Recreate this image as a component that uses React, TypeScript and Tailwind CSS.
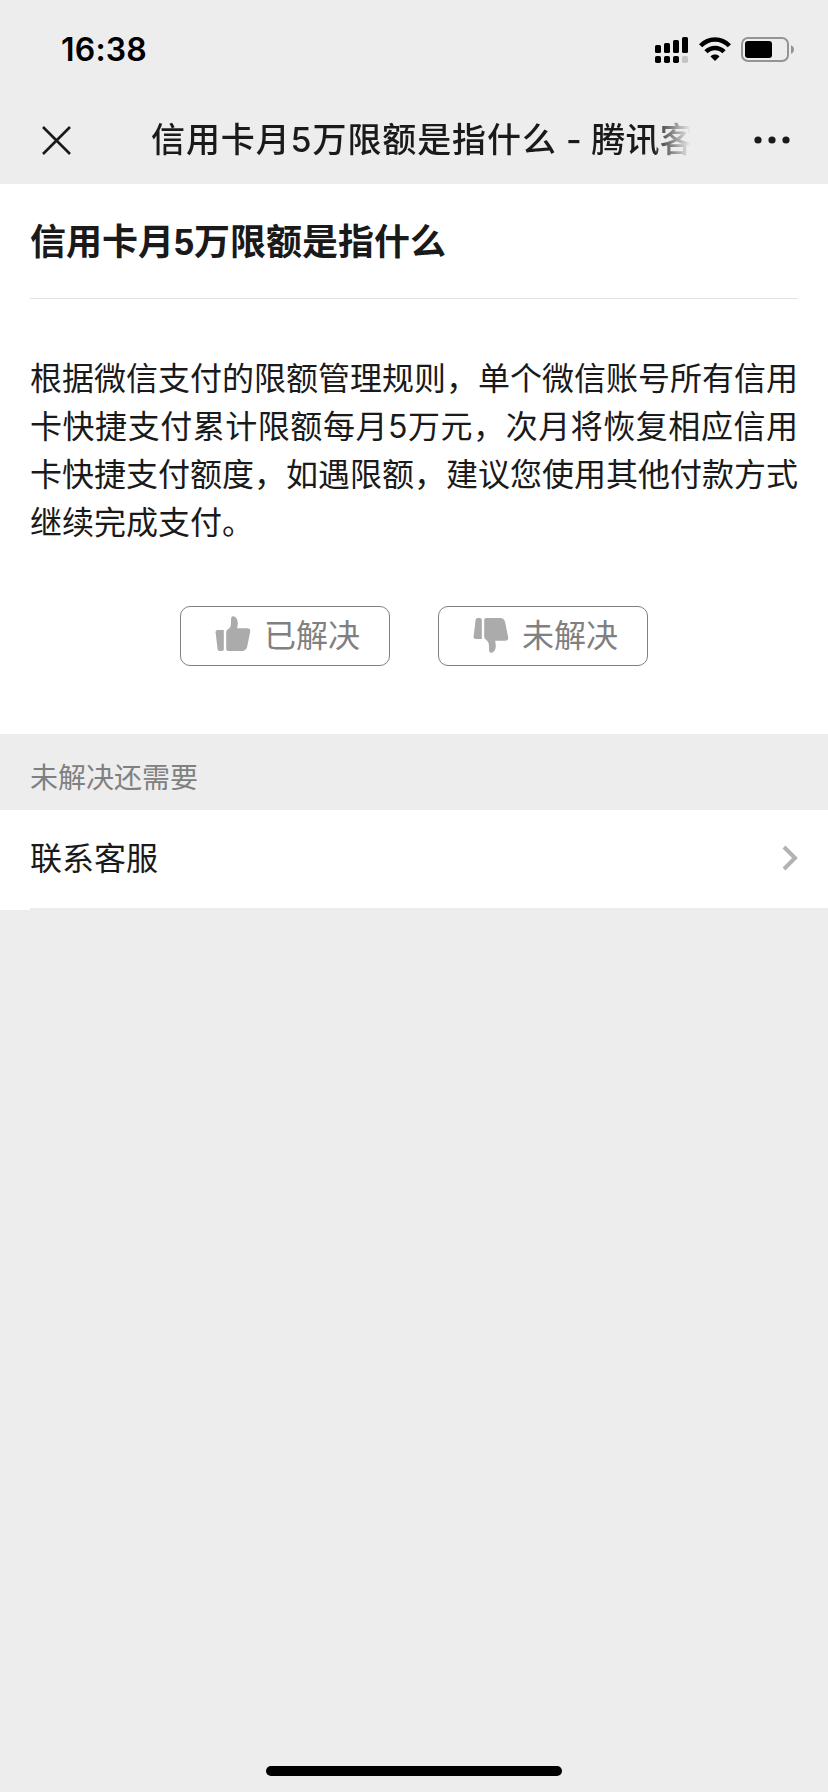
import { useState } from "react";

type Vote = "solved" | "unsolved" | null;

const title = "信用卡月5万限额是指什么";

function SignalIcon() {
  return (
    <svg width="34" height="26" viewBox="0 0 34 26" fill="#000">
      <rect x="0" y="8" width="6" height="8" rx="1.5" />
      <rect x="9" y="6" width="6" height="10" rx="1.5" />
      <rect x="18" y="3" width="6" height="13" rx="1.5" />
      <rect x="27" y="0" width="6" height="16" rx="1.5" />
      <rect x="0" y="19" width="6" height="7" rx="1.8" />
      <rect x="9" y="19" width="6" height="7" rx="1.8" />
      <rect x="18" y="19" width="6" height="7" rx="1.8" />
      <rect x="27" y="19" width="6" height="7" rx="1.8" fill="#c4c4c4" />
    </svg>
  );
}

function WifiIcon() {
  return (
    <svg width="32" height="24" viewBox="0 0 32 24">
      <g fill="none" stroke="#000" strokeWidth="4.5">
        <path d="M1.6 8.8C9.8 0.4 22.2 0.4 30.4 8.8" />
        <path d="M7 14.8C12 9.6 20 9.6 25 14.8" />
      </g>
      <path d="M16 24 11.5 19.4C13.9 17 18.1 17 20.5 19.4Z" fill="#000" />
    </svg>
  );
}

function BatteryIcon() {
  return (
    <svg width="54" height="25" viewBox="0 0 54 25">
      <rect
        x="1"
        y="1"
        width="46"
        height="23"
        rx="6"
        fill="none"
        stroke="#949494"
        strokeWidth="2"
      />
      <rect x="4" y="4" width="27" height="17" rx="3" fill="#000" />
      <path d="M50 8.2C54 9.6 54 15.4 50 16.8Z" fill="#949494" />
    </svg>
  );
}

function ThumbUpIcon() {
  return (
    <svg width="36" height="36" viewBox="0 0 36 36" fill="#ababab">
      <path d="M2.6 14H8.8V33.2Q8.8 35 7 35H4.6Q2.9 35 2.6 33.2L0.6 16.2Q0.4 14 2.6 14Z" />
      <path d="M11.2 16.2Q11.2 14.2 13 13.2C15.6 11.6 16.2 9 16 5.4C15.9 1.8 16.4 0.2 18 0.2C20.8 0.2 22.8 3.4 22.8 7C22.8 9.2 22.2 10.8 22.2 12.2H32Q35.6 12.2 35.2 15.4L32.2 30.6Q31.2 35 27 35H13.2Q11.2 35 11.2 33Z" />
    </svg>
  );
}

function ThumbDownIcon() {
  return (
    <svg width="36" height="36" viewBox="0 0 36 36" fill="#ababab">
      <path d="M4.6 1H7Q8.8 1 8.8 2.8V22H2.6Q0.4 22 0.6 19.8L2.6 2.8Q2.9 1 4.6 1Z" />
      <path d="M11.2 3Q11.2 1 13.2 1H27Q31.2 1 32.2 5.4L35.2 20.6Q35.6 23.8 32 23.8H22.2C22.2 25.2 22.8 26.8 22.8 29C22.8 32.6 20.8 35.8 18 35.8C16.4 35.8 15.9 34.2 16 30.6C16.2 27 15.6 24.4 13 22.8Q11.2 21.8 11.2 19.8Z" />
    </svg>
  );
}

function StatusBar() {
  return (
    <div className="flex h-[100px] items-center justify-between pr-[33px] pl-[61px]">
      <div className="font-['Inter','Noto_Sans_CJK_SC',sans-serif] text-[32px] leading-none font-semibold tracking-[0.2px] text-black">
        16:38
      </div>
      <div className="flex items-start">
        <SignalIcon />
        <div className="ml-[10px]">
          <WifiIcon />
        </div>
        <div className="ml-[10px]">
          <BatteryIcon />
        </div>
      </div>
    </div>
  );
}

function NavBar() {
  return (
    <div className="flex h-[84px] items-center pr-[38px] pb-[4px] pl-[42px]">
      <button type="button" aria-label="关闭">
        <svg width="29" height="29" viewBox="0 0 29 29" stroke="#1a1a1a" strokeWidth="2.6">
          <path d="M1 1 28 28M28 1 1 28" />
        </svg>
      </button>
      <h1 className="ml-[80px] w-[545px] mask-r-from-92% mask-r-to-99% text-[34px] leading-[50px] font-medium whitespace-nowrap">
        <span className="tracking-[0.9px]">{title}</span>
        <span className="tracking-[0.2px]"> - 腾讯客</span>
      </h1>
      <button type="button" aria-label="更多" className="ml-auto">
        <svg width="36" height="8" viewBox="0 0 36 8" fill="#1a1a1a">
          <circle cx="4" cy="4" r="3.6" />
          <circle cx="18" cy="4" r="3.6" />
          <circle cx="32" cy="4" r="3.6" />
        </svg>
      </button>
    </div>
  );
}

export default function App() {
  const [vote, setVote] = useState<Vote>(null);

  return (
    <div className="flex h-[1792px] w-[828px] flex-col bg-[#ededed] font-['Inter','Noto_Sans_CJK_SC',sans-serif] text-[#1a1a1a]">
      <StatusBar />
      <NavBar />

      <main className="h-[550px] bg-white px-[30px]">
        <h2 className="h-[115px] border-b border-[#e2e2e2] pt-[33px] font-['Liberation_Sans','Noto_Sans_CJK_SC',sans-serif] text-[36px] leading-[52px] font-bold">
          {title}
        </h2>
        <p className="mt-[56px] text-justify text-[32px] leading-[48px]">
          根据微信支付的限额管理规则，单个微信账号所有信用卡快捷支付累计限额每月5万元，次月将恢复相应信用卡快捷支付额度，如遇限额，建议您使用其他付款方式继续完成支付。
        </p>
        <div className="mt-[59px] flex justify-center gap-12 text-[32px] leading-none text-[#808080]">
          <button
            type="button"
            aria-pressed={vote === "solved"}
            onClick={() => setVote("solved")}
            className="flex h-[60px] w-[210px] items-center rounded-[10px] border border-[#808080] pl-[34px]"
          >
            <span className="-mt-[5px]">
              <ThumbUpIcon />
            </span>
            <span className="ml-[13px]">已解决</span>
          </button>
          <button
            type="button"
            aria-pressed={vote === "unsolved"}
            onClick={() => setVote("unsolved")}
            className="flex h-[60px] w-[210px] items-center rounded-[10px] border border-[#808080] pl-[34px]"
          >
            <span className="-mt-[3px]">
              <ThumbDownIcon />
            </span>
            <span className="ml-[13px]">未解决</span>
          </button>
        </div>
      </main>

      <div className="h-[76px] px-[30px] pt-[24px] text-[28px] leading-[40px] text-[#808080]">
        未解决还需要
      </div>

      <div className="h-[100px] bg-white pl-[30px]">
        <a
          href="#service"
          className="flex h-[100px] items-center justify-between border-b-2 border-[#ececec] pr-[30px] text-[32px] leading-[48px]"
        >
          <span>联系客服</span>
          <svg
            className="mb-[2px]"
            width="16"
            height="26"
            viewBox="0 0 16 26"
            fill="none"
            stroke="#b2b2b2"
            strokeWidth="4"
          >
            <path d="M2 2 13 13 2 24" />
          </svg>
        </a>
      </div>

      <div className="mx-auto mt-auto mb-[16px] h-[10px] w-[296px] rounded-full bg-black" />
    </div>
  );
}
